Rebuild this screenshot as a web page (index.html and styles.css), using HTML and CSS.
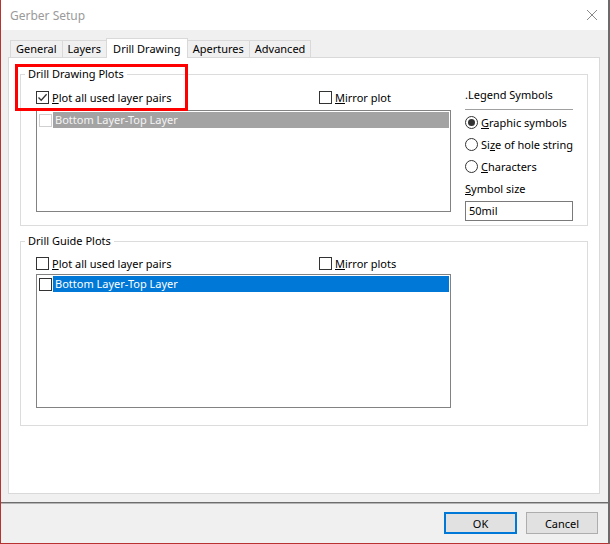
FILE: index.html
```html
<!DOCTYPE html>
<html lang="en">
<head>
  <meta charset="UTF-8">
  <title>Gerber Setup</title>
  <link rel="stylesheet" href="styles.css">
</head>
<body>
  <div class="window">
    <div class="titlebar">
      <span class="title">Gerber Setup</span>
      <svg class="close" width="12" height="12" viewBox="0 0 12 12">
        <path d="M1 1 L11 11 M11 1 L1 11" stroke="#8a8a8a" stroke-width="1" fill="none"/>
      </svg>
    </div>

    <div class="content">
      <div class="tabs">
        <div class="tab">General</div>
        <div class="tab">Layers</div>
        <div class="tab active">Drill Drawing</div>
        <div class="tab">Apertures</div>
        <div class="tab">Advanced</div>
      </div>

      <div class="panel">
        <fieldset class="group first">
          <legend>Drill Drawing Plots</legend>
          <div class="group-body">
            <div class="left-col">
              <div class="check-row">
                <label class="check first">
                  <span class="box">
                    <svg width="11" height="11" viewBox="0 0 11 11"><path d="M1.5 5.5 L4.2 8.3 L9.6 2.2" stroke="#333" stroke-width="1.3" fill="none"/></svg>
                  </span>
                  <span><u>P</u>lot all used layer pairs</span>
                </label>
                <label class="check">
                  <span class="box"></span>
                  <span><u>M</u>irror plot</span>
                </label>
              </div>
              <div class="listbox short">
                <div class="item disabled">
                  <span class="box"></span>
                  <span class="item-text">Bottom Layer-Top Layer</span>
                </div>
              </div>
            </div>

            <div class="right-col">
              <div class="legend-title">.Legend Symbols</div>
              <label class="radio on">
                <span class="dot"></span>
                <span><u>G</u>raphic symbols</span>
              </label>
              <label class="radio">
                <span class="dot"></span>
                <span>Si<u>z</u>e of hole string</span>
              </label>
              <label class="radio">
                <span class="dot"></span>
                <span><u>C</u>haracters</span>
              </label>
              <div class="field-label"><u>S</u>ymbol size</div>
              <div class="input">50mil</div>
            </div>
          </div>
        </fieldset>

        <fieldset class="group second">
          <legend>Drill Guide Plots</legend>
          <div class="left-col">
            <div class="check-row">
              <label class="check first">
                <span class="box"></span>
                <span><u>P</u>lot all used layer pairs</span>
              </label>
              <label class="check">
                <span class="box"></span>
                <span><u>M</u>irror plots</span>
              </label>
            </div>
            <div class="listbox tall">
              <div class="item selected">
                <span class="box"></span>
                <span class="item-text">Bottom Layer-Top Layer</span>
              </div>
            </div>
          </div>
        </fieldset>
      </div>
    </div>

    <div class="footer">
      <button class="btn default">OK</button>
      <button class="btn">Cancel</button>
    </div>

    <div class="highlight"></div>
  </div>
</body>
</html>
```

FILE: styles.css
```css
body {
  margin: 0;
  font-family: 'Noto Sans', 'Liberation Sans', sans-serif;
  font-size: 11px;
  color: #000;
  background: #fff;
}
.window {
  position: relative;
  width: 610px;
  height: 544px;
  box-sizing: border-box;
  border-left: 1px solid #b83232;
  border-right: 2px solid #6b6b6b;
  border-bottom: 1px solid #b83232;
  background: #f0f0f0;
  display: flex;
  flex-direction: column;
  white-space: nowrap;
}
.titlebar {
  height: 30px;
  background: #fff;
  display: flex;
  align-items: center;
  justify-content: space-between;
  padding: 0 10px 0 9px;
}
.title {
  font-size: 12px;
  color: #9a9a9a;
}
.content {
  padding: 8px 8px 8px 7px;
}
.tabs {
  display: flex;
  align-items: flex-end;
  height: 19px;
  padding-left: 2px;
}
.tab {
  height: 17px;
  line-height: 16px;
  padding: 0 5px;
  border: 1px solid #d9d9d9;
  border-bottom: none;
  margin-right: -1px;
  box-sizing: border-box;
  background: #f0f0f0;
}
.tab.active {
  position: relative;
  height: 20px;
  line-height: 19px;
  margin-bottom: -1px;
  background: #fff;
  padding: 0 6px;
  z-index: 1;
}
.panel {
  height: 437px;
  box-sizing: border-box;
  background: #fff;
  border: 1px solid #d9d9d9;
  padding: 8px 11px;
}
.group {
  margin: 0;
  min-width: 0;
  border: 1px solid #dcdcdc;
  padding: 7px 13px 13px 15px;
}
.group.first {
  padding-bottom: 4px;
}
.group legend {
  padding: 0 3px;
  margin-left: -11px;
  line-height: 16px;
}
.group.second {
  margin-top: 7px;
  padding-top: 6px;
  padding-bottom: 17px;
}
.group-body {
  display: flex;
  gap: 14px;
}
.left-col {
  width: 415px;
}
.check-row {
  display: flex;
  height: 16px;
}
.check {
  display: flex;
  align-items: center;
  gap: 3px;
}
.check.first {
  width: 283px;
}
.box {
  width: 13px;
  height: 13px;
  flex: none;
  box-sizing: border-box;
  border: 1px solid #333;
  background: #fff;
  display: flex;
  align-items: center;
  justify-content: center;
}
.listbox {
  margin-top: 5px;
  border: 1px solid #828282;
  box-sizing: border-box;
  padding: 1px 1px 0 2px;
}
.listbox.short {
  height: 102px;
}
.listbox.tall {
  height: 134px;
  margin-top: 3px;
}
.item {
  display: flex;
  align-items: center;
  height: 16px;
  gap: 1px;
}
.item-text {
  flex: 1;
  height: 16px;
  line-height: 16px;
  padding-left: 2px;
}
.item.disabled .box {
  border-color: #d0d0d0;
}
.item.disabled .item-text {
  background: #a3a3a3;
  color: #f4f4f4;
}
.item.selected .item-text {
  background: #0078d7;
  color: #fff;
}
.right-col {
  width: 108px;
}
.legend-title {
  margin-top: -2px;
  line-height: 16px;
  padding-bottom: 6px;
  border-bottom: 1px solid #a0a0a0;
}
.radio {
  display: flex;
  align-items: center;
  gap: 3px;
  height: 16px;
  margin-top: 6px;
}
.legend-title + .radio {
  margin-top: 4px;
}
.dot {
  width: 13px;
  height: 13px;
  flex: none;
  box-sizing: border-box;
  border: 1px solid #333;
  border-radius: 50%;
  background: #fff;
  display: flex;
  align-items: center;
  justify-content: center;
}
.radio.on .dot::after {
  content: '';
  width: 7px;
  height: 7px;
  border-radius: 50%;
  background: #333;
}
.field-label {
  margin-top: 7px;
  line-height: 16px;
}
.input {
  margin-top: 4px;
  height: 20px;
  box-sizing: border-box;
  border: 1px solid #7a7a7a;
  padding-left: 3px;
  line-height: 18px;
}
.footer {
  flex: 1;
  border-top: 1px solid #6d6d6d;
  box-shadow: inset 0 1px 0 #b4b4b4;
  display: flex;
  justify-content: flex-end;
  align-items: flex-start;
  gap: 9px;
  padding: 9px 10px 0 0;
}
.btn {
  height: 22px;
  width: 72px;
  font-family: inherit;
  font-size: 11px;
  background: #e1e1e1;
  border: 1px solid #adadad;
  padding: 0;
}
.btn.default {
  width: 73px;
  border: 2px solid #0078d7;
}
.highlight {
  position: absolute;
  left: 14px;
  top: 64px;
  width: 173px;
  height: 47px;
  box-sizing: border-box;
  border: 3px solid #f00;
}
```
